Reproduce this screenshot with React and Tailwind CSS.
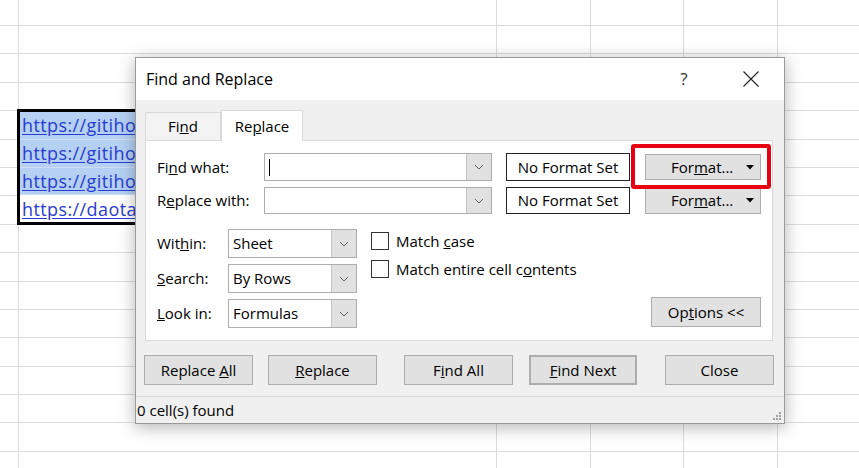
import React from "react";

const rowCount = 17;

const links = [
  { text: "https://gitiho.com/khoa-hoc", selected: true },
  { text: "https://gitiho.com/bai-viet", selected: true },
  { text: "https://gitiho.com/tai-lieu", selected: true },
  { text: "https://daotao.gitiho.com", selected: false },
];

const Chevron = () => (
  <svg width="10" height="6" viewBox="0 0 10 6" fill="none">
    <path d="M1 1 L5 5 L9 1" stroke="#606060" strokeWidth="1" />
  </svg>
);

const Caret = () => (
  <svg width="8" height="5" viewBox="0 0 8 5">
    <path d="M0 0 H8 L4 4.5 Z" fill="#000" />
  </svg>
);

// gray windows push button
const Btn = ({ className = "", children }) => (
  <div
    className={
      "flex items-center justify-center h-[30px] bg-[#e1e1e1] border border-[#adadad] text-black " +
      className
    }
  >
    {children}
  </div>
);

const Combo = ({ className = "", children }) => (
  <div className={"flex bg-white border border-[#adadad] " + className}>
    <div className="flex-1 flex items-center pl-[4px] overflow-hidden">{children}</div>
    <div className="w-[25px] flex items-center justify-center bg-[#e1e1e1] border-l border-[#c4c4c4]">
      <Chevron />
    </div>
  </div>
);

const Check = ({ children }) => (
  <div className="flex items-center h-[18px]">
    <div className="w-[18px] h-[18px] border border-[#333] bg-white" />
    <span className="ml-[7px]">{children}</span>
  </div>
);

const App = () => {
  return (
    <div className="relative w-[859px] h-[468px] overflow-hidden bg-white font-['Open_Sans',sans-serif] text-[15px] text-black">
      {/* ===== SHEET GRID ===== */}
      <div className="flex flex-col">
        <div className="h-[26px] border-b border-[#dcdcdc]" />
        {Array.from({ length: rowCount }).map((_, i) => (
          <div key={i} className="h-[28.4px] border-b border-[#dcdcdc]" />
        ))}
      </div>
      <div className="absolute inset-0 flex">
        <div className="w-[19px] border-r border-[#dcdcdc]" />
        <div className="w-[478px] border-r border-[#dcdcdc]" />
        <div className="w-[94px] border-r border-[#dcdcdc]" />
        <div className="w-[93px] border-r border-[#dcdcdc]" />
        <div className="w-[94px] border-r border-[#dcdcdc]" />
      </div>

      {/* selected cells */}
      <div className="absolute left-[17px] top-[109px] w-[150px] h-[116px] border-[3px] border-black bg-white flex flex-col">
        {links.map((l, i) => (
          <div
            key={i}
            className={
              "flex-1 flex items-center pl-[2px] overflow-hidden whitespace-nowrap " +
              (l.selected ? "bg-[#b4d1f4] border-b border-[#cfdff3]" : "bg-white")
            }
          >
            <span className="text-[18px] tracking-[0.4px] text-[#2a3bd1] underline underline-offset-2 leading-none">
              {l.text}
            </span>
          </div>
        ))}
      </div>

      {/* ===== DIALOG ===== */}
      <div className="absolute left-[135px] top-[57px] w-[650px] h-[367px] flex flex-col border border-[#9a9a9a] bg-[#f0f0f0] shadow-[0_3px_16px_rgba(0,0,0,0.3)]">
        {/* title bar */}
        <div className="h-[42px] flex items-center bg-white pl-[10px] pr-[10px]">
          <span className="text-[16px]">Find and Replace</span>
          <div className="ml-auto w-[46px] flex justify-center text-[17px] text-[#333]">?</div>
          <div className="ml-[21px] w-[46px] flex justify-center">
            <svg width="16" height="16" viewBox="0 0 16 16">
              <path d="M0.5 0.5 L15.5 15.5 M15.5 0.5 L0.5 15.5" stroke="#222" strokeWidth="1.1" />
            </svg>
          </div>
        </div>

        {/* tabs */}
        <div className="mt-[10px] ml-[9px] h-[30px] flex items-end">
          <div className="w-[76px] h-[28px] flex items-center justify-center border border-b-0 border-[#d9d9d9] bg-[#f3f3f3]">
            <span>
              Fi<u>n</u>d
            </span>
          </div>
          <div className="relative z-10 -mb-px w-[82px] h-[31px] flex items-center justify-center border border-b-0 border-[#d9d9d9] bg-white">
            <span>
              Re<u>p</u>lace
            </span>
          </div>
        </div>

        {/* panel */}
        <div className="ml-[9px] w-[628px] h-[201px] bg-white border border-[#d9d9d9] pl-[11px] pr-[11px] pt-[12px] flex flex-col">
          <div className="flex items-center h-[28px]">
            <span className="w-[107px]">
              Fi<u>n</u>d what:
            </span>
            <Combo className="w-[228px] h-[28px]">
              <div className="w-px h-[17px] bg-black" />
            </Combo>
            <div className="ml-[14px] w-[124px] h-[28px] flex items-center justify-center border border-[#222] bg-white">
              No Format Set
            </div>
            <div className="ml-[15px] w-[116px] h-[26px] flex items-center pl-[25px] pr-[6px] bg-[#e1e1e1] border border-[#adadad]">
              <span>
                For<u>m</u>at...
              </span>
              <span className="ml-auto">
                <Caret />
              </span>
            </div>
          </div>

          <div className="mt-[6px] flex items-center h-[27px]">
            <span className="w-[107px]">
              R<u>e</u>place with:
            </span>
            <Combo className="w-[228px] h-[27px]" />
            <div className="ml-[14px] w-[124px] h-[27px] flex items-center justify-center border border-[#222] bg-white">
              No Format Set
            </div>
            <div className="ml-[15px] w-[116px] h-[26px] flex items-center pl-[25px] pr-[6px] bg-[#e1e1e1] border border-[#adadad]">
              <span>
                For<u>m</u>at...
              </span>
              <span className="ml-auto">
                <Caret />
              </span>
            </div>
          </div>

          <div className="mt-[15px] flex">
            <div className="flex flex-col gap-[6px]">
              <div className="flex items-center h-[29px]">
                <span className="w-[71px]">
                  Wit<u>h</u>in:
                </span>
                <Combo className="w-[129px] h-[29px]">Sheet</Combo>
              </div>
              <div className="flex items-center h-[29px]">
                <span className="w-[71px]">
                  <u>S</u>earch:
                </span>
                <Combo className="w-[129px] h-[29px]">By Rows</Combo>
              </div>
              <div className="flex items-center h-[29px]">
                <span className="w-[71px]">
                  <u>L</u>ook in:
                </span>
                <Combo className="w-[129px] h-[29px]">Formulas</Combo>
              </div>
            </div>

            <div className="ml-[14px] pt-[3px] flex flex-col gap-[10px]">
              <Check>
                Match <u>c</u>ase
              </Check>
              <Check>
                Match entire cell c<u>o</u>ntents
              </Check>
            </div>

            <div className="flex-1 flex items-end justify-end pb-[1px]">
              <Btn className="w-[110px]">
                <span>
                  Op<u>t</u>ions &lt;&lt;
                </span>
              </Btn>
            </div>
          </div>
        </div>

        {/* buttons */}
        <div className="mt-[14px] pl-[8px] flex">
          <Btn className="w-[109px]">
            <span>
              Replace <u>A</u>ll
            </span>
          </Btn>
          <Btn className="ml-[15px] w-[109px]">
            <span>
              <u>R</u>eplace
            </span>
          </Btn>
          <Btn className="ml-[27px] w-[109px]">
            <span>
              F<u>i</u>nd All
            </span>
          </Btn>
          <Btn className="ml-[16px] w-[108px] border-2 border-[#0078d7]">
            <span>
              <u>F</u>ind Next
            </span>
          </Btn>
          <Btn className="ml-[28px] w-[109px]">
            <span>Close</span>
          </Btn>
        </div>

        {/* status bar */}
        <div className="mt-[11px] border-t border-[#dadada] flex-1 flex items-center pl-[1px] relative">
          <span>0 cell(s) found</span>
          <svg className="absolute right-[2px] bottom-[2px]" width="10" height="10" viewBox="0 0 10 10">
            <g fill="#a0a0a0">
              <rect x="7" y="1" width="2" height="2" />
              <rect x="4" y="4" width="2" height="2" />
              <rect x="7" y="4" width="2" height="2" />
              <rect x="1" y="7" width="2" height="2" />
              <rect x="4" y="7" width="2" height="2" />
              <rect x="7" y="7" width="2" height="2" />
            </g>
          </svg>
        </div>
      </div>

      {/* red highlight */}
      <div className="absolute left-[631px] top-[144px] w-[140px] h-[45px] border-[4px] border-[#e60012] rounded-[3px]" />
    </div>
  );
};

export default App;
